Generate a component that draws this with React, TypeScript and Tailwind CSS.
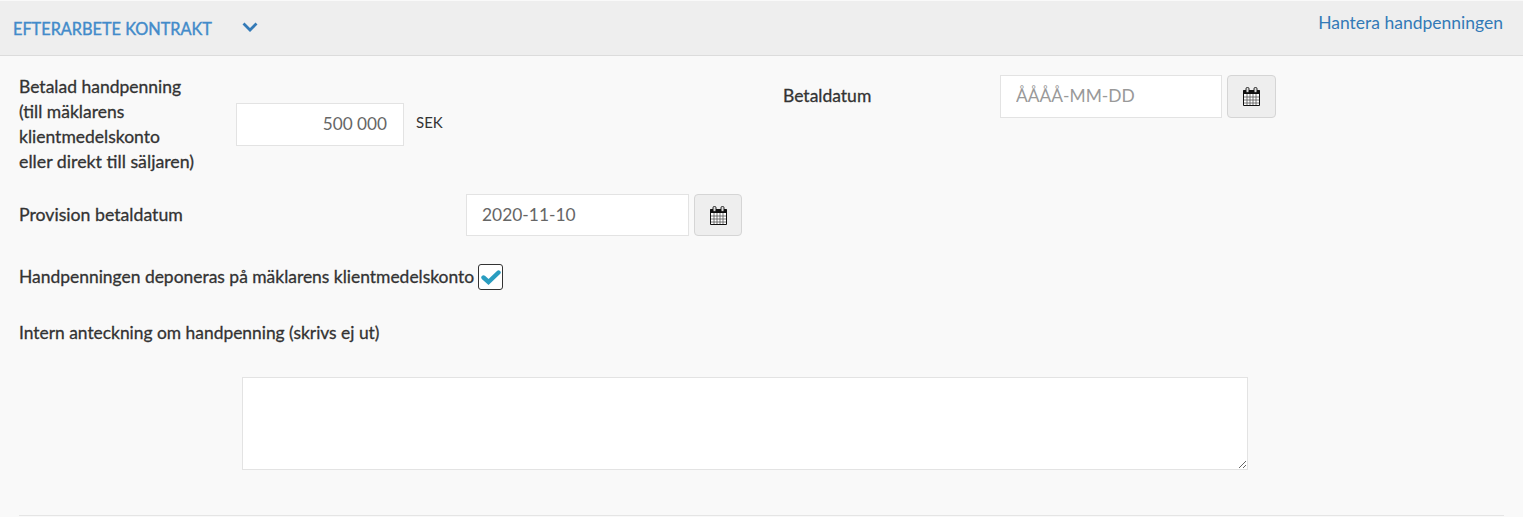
function CalendarIcon() {
  return (
    <svg width="17" height="19" viewBox="0 0 17 19" className="block">
      <path d="M0.5 3.5h16v15h-16z" fill="#fff" stroke="#111" />
      <path d="M0.5 3h16v4h-16z" fill="#111" />
      <path d="M1 10h15M1 13h15M1 16h15M4 7v11M7 7v11M10 7v11M13 7v11" stroke="#555" strokeWidth="0.8" fill="none" />
      <rect x="3" y="0.5" width="3" height="5" rx="1.2" fill="#ddd" stroke="#111" strokeWidth="0.9" />
      <rect x="11" y="0.5" width="3" height="5" rx="1.2" fill="#ddd" stroke="#111" strokeWidth="0.9" />
    </svg>
  );
}

function CheckIcon() {
  return (
    <svg width="20" height="15" viewBox="0 0 20 15" className="block">
      <path d="M2.5 7.5 L7.5 12 L17.5 2.5" fill="none" stroke="#2a9dc0" strokeWidth="4.4" strokeLinecap="round" strokeLinejoin="miter" />
    </svg>
  );
}

function ChevronIcon() {
  return (
    <svg width="16" height="10" viewBox="0 0 16 10" className="block">
      <path d="M1.5 1.5 L8 8 L14.5 1.5" fill="none" stroke="#337ab7" strokeWidth="2.8" />
    </svg>
  );
}

function DateField({ value, placeholder, small }: { value?: string; placeholder?: string; small?: boolean }) {
  return (
    <div className="flex items-start gap-[5px]">
      <input
        readOnly
        value={value}
        placeholder={placeholder}
        className={
          small
            ? "w-[223px] h-[42px] bg-white border border-[#e3e3e3] pl-[15px] pr-[16px] pb-[2px] text-[17.4px] text-[#666] placeholder:text-[#999] outline-none"
            : "w-[222px] h-[43px] bg-white border border-[#e3e3e3] pl-[15px] pr-[16px] pb-[2px] text-[17.4px] text-[#666] placeholder:text-[#999] outline-none"
        }
      />
      <button
        className={
          small
            ? "w-[48px] h-[42px] rounded-[4px] bg-[#eeeeee] border border-[#d5d5d5] flex items-center justify-center"
            : "w-[49px] h-[43px] rounded-[4px] bg-[#eeeeee] border border-[#d5d5d5] flex items-center justify-center"
        }
      >
        <CalendarIcon />
      </button>
    </div>
  );
}

export default function App() {
  return (
    <div className="h-[517px] overflow-hidden bg-[#f9f9f9] text-[#333] text-[17.5px] font-['Lato','Liberation_Sans',sans-serif]">
      <header className="h-[56px] bg-[#eeeeee] border-t border-t-[#f9f9f9] border-b border-b-[#dcdcdc] flex justify-between pl-[13px] pr-[20px]">
        <div className="flex items-start pt-[17px]">
          <span className="text-[16.3px] leading-[22px] text-[#428bca] w-[229px] [-webkit-text-stroke:0.4px]">EFTERARBETE KONTRAKT</span>
          <span className="mt-[4px]">
            <ChevronIcon />
          </span>
        </div>
        <a className="text-[17.5px] leading-[24px] text-[#337ab7] pt-[10px]">Hantera handpenningen</a>
      </header>

      <main className="pl-[19px]">
        <section className="flex h-[123px] pt-[19px]">
          <div className="w-[217px] leading-[25px] -mt-[1px] [-webkit-text-stroke:0.3px]">
            <div>Betalad handpenning</div>
            <div>(till mäklarens</div>
            <div>klientmedelskonto</div>
            <div className="text-[17.8px]">eller direkt till säljaren)</div>
          </div>
          <div className="w-[547px] flex items-start pt-[28px]">
            <input
              readOnly
              value="500 000"
              className="w-[168px] h-[43px] bg-white border border-[#e3e3e3] px-[16px] pb-[2px] text-right text-[17.2px] text-[#666] outline-none"
            />
            <span className="ml-[12px] mt-[9px] text-[15px] leading-[20px] text-[#333]">SEK</span>
          </div>
          <div className="w-[217px] leading-[25px] pt-[8px] [-webkit-text-stroke:0.3px]">Betaldatum</div>
          <DateField placeholder="ÅÅÅÅ-MM-DD" />
        </section>

        <section className="flex items-start h-[42px] mt-[15px]">
          <div className="w-[447px] leading-[25px] pt-[8px] text-[17.7px] [-webkit-text-stroke:0.3px]">Provision betaldatum</div>
          <DateField small value="2020-11-10" />
        </section>

        <section className="flex items-start mt-[28px] h-[26px]">
          <span className="leading-[25px] text-[17.45px] [-webkit-text-stroke:0.3px]">Handpenningen deponeras på mäklarens klientmedelskonto</span>
          <span className="ml-[4px] w-[25px] h-[26px] rounded-[3px] border border-[#333] bg-white flex items-center justify-center">
            <CheckIcon />
          </span>
        </section>

        <section className="mt-[30px] leading-[25px] text-[17.4px] [-webkit-text-stroke:0.3px]">Intern anteckning om handpenning (skrivs ej ut)</section>

        <section className="pl-[223px] mt-[32px]">
          <textarea readOnly className="block w-[1006px] h-[93px] bg-white border border-[#e3e3e3] outline-none" />
        </section>

        <hr className="mt-[45px] mr-[19px] border-t border-[#e5e5e5]" />
      </main>
    </div>
  );
}
